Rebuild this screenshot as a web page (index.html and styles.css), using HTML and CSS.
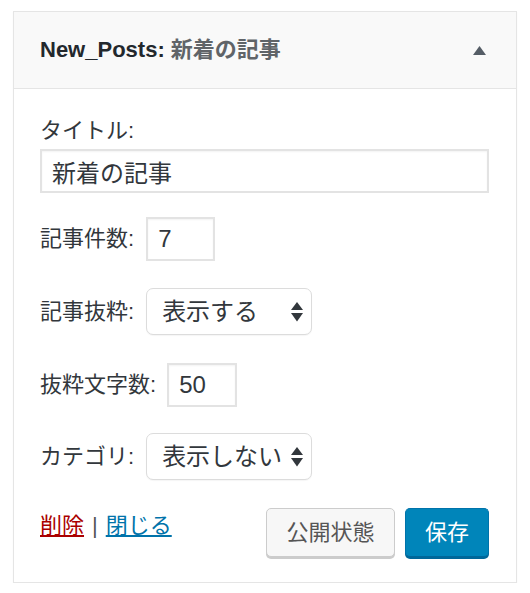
FILE: index.html
```html
<!DOCTYPE html>
<html lang="ja">
<head>
<meta charset="utf-8">
<title>New_Posts widget</title>
<link rel="stylesheet" href="styles.css">
</head>
<body>
<div class="widget">
  <div class="widget-top">
    <h3 class="widget-title">New_Posts: <span class="in-title">新着の記事</span></h3>
    <svg class="toggle" width="13" height="9" viewBox="0 0 13 9"><polygon points="6.5,0 13,9 0,9" fill="#555d66"/></svg>
  </div>
  <div class="widget-inside">
    <label class="block-label" for="t">タイトル:</label>
    <input id="t" class="text-input" type="text" value="新着の記事">

    <div class="row r2">
      <label class="lbl" for="n1">記事件数:</label>
      <input id="n1" class="num-input" type="text" value="7">
    </div>

    <div class="row r3">
      <label class="lbl">記事抜粋:</label>
      <div class="select">
        <span class="select-text">表示する</span>
        <svg class="arrows" width="12" height="20" viewBox="0 0 12 20"><polygon points="6,0 12,8 0,8" fill="#32373c"/><polygon points="0,11 12,11 6,19.5" fill="#32373c"/></svg>
      </div>
    </div>

    <div class="row r4">
      <label class="lbl" for="n2">抜粋文字数:</label>
      <input id="n2" class="num-input wide" type="text" value="50">
    </div>

    <div class="row r5">
      <label class="lbl">カテゴリ:</label>
      <div class="select">
        <span class="select-text">表示しない</span>
        <svg class="arrows" width="12" height="20" viewBox="0 0 12 20"><polygon points="6,0 12,8 0,8" fill="#32373c"/><polygon points="0,11 12,11 6,19.5" fill="#32373c"/></svg>
      </div>
    </div>

    <div class="actions">
      <div class="links">
        <a class="delete" href="#">削除</a><span class="sep">|</span><a class="close" href="#">閉じる</a>
      </div>
      <div class="buttons">
        <button class="btn btn-secondary" type="button">公開状態</button>
        <button class="btn btn-primary" type="button">保存</button>
      </div>
    </div>
  </div>
</div>
</body>
</html>
```

FILE: styles.css
```css
html, body {
  margin: 0;
  padding: 0;
  background: #ffffff;
}

body {
  font-family: "Liberation Sans", "Noto Sans CJK JP", sans-serif;
  color: #32373c;
}

.widget {
  box-sizing: border-box;
  width: 504px;
  margin: 11px 0 0 13px;
  border: 1px solid #e5e5e5;
  background: #ffffff;
  box-shadow: 0 1px 1px rgba(0, 0, 0, 0.05);
}

.widget-top {
  box-sizing: border-box;
  height: 77px;
  background: #f9f9f9;
  border-bottom: 1px solid #e5e5e5;
  display: flex;
  align-items: center;
  justify-content: space-between;
  padding: 0 30px 0 26px;
}

.widget-title {
  margin: 0;
  font-size: 22px;
  line-height: 30px;
  font-weight: 700;
  color: #23282d;
}

.in-title {
  color: #606468;
}

.toggle {
  display: block;
}

.widget-inside {
  padding: 27px 27px 25px 26px;
}

.block-label {
  display: block;
  font-size: 22px;
  line-height: 30px;
  margin-bottom: 3px;
}

.text-input,
.num-input {
  box-sizing: border-box;
  display: block;
  height: 44px;
  margin: 0;
  border: 2px solid #e3e3e3;
  border-radius: 0;
  background: #ffffff;
  box-shadow: inset 0 1px 2px rgba(0, 0, 0, 0.05);
  font-family: "Liberation Sans", "Noto Sans CJK JP", sans-serif;
  font-size: 24px;
  color: #32373c;
  padding: 0 0 0 10px;
  outline: none;
}

.text-input {
  width: 449px;
}

.num-input {
  width: 69px;
}

.num-input.wide {
  width: 70px;
}

.row {
  display: flex;
  align-items: center;
}

.r2 { margin-top: 24px; }
.r3 { margin-top: 27px; }
.r4 { margin-top: 28px; }
.r5 { margin-top: 26px; }

.lbl {
  font-size: 22px;
  line-height: 30px;
  margin-right: 12px;
  white-space: nowrap;
}

.r4 .lbl {
  margin-right: 11px;
}

.select {
  position: relative;
  box-sizing: border-box;
  width: 166px;
  height: 47px;
  border: 1px solid #dcdcdc;
  border-radius: 7px;
  background: #ffffff;
  box-shadow: 0 1px 1px rgba(0, 0, 0, 0.04);
  display: flex;
  align-items: center;
  padding-left: 15px;
}

.select-text {
  font-size: 24px;
  line-height: 30px;
  color: #32373c;
  white-space: nowrap;
}

.arrows {
  position: absolute;
  right: 8px;
  top: 13px;
}

.actions {
  margin-top: 28px;
  display: flex;
  justify-content: space-between;
  align-items: flex-start;
}

.links {
  font-size: 22px;
  line-height: 30px;
  padding-top: 3px;
}

.delete {
  color: #aa0000;
  text-decoration: underline;
}

.sep {
  color: #555555;
  margin: 0 8px;
}

.close {
  color: #0073aa;
  text-decoration: underline;
}

.buttons {
  display: flex;
  gap: 10px;
}

.btn {
  box-sizing: border-box;
  height: 49px;
  margin: 0;
  border-radius: 5px;
  font-family: "Liberation Sans", "Noto Sans CJK JP", sans-serif;
  font-size: 22px;
  line-height: 30px;
  padding: 0 18px;
  cursor: pointer;
}

.btn-secondary {
  width: 129px;
  background: #f7f7f7;
  border: 1px solid #cccccc;
  color: #555555;
  box-shadow: 0 2px 0 #cccccc;
}

.btn-primary {
  width: 84px;
  background: #0085ba;
  border: 1px solid #0073aa;
  border-bottom-color: #006799;
  color: #ffffff;
  box-shadow: 0 2px 0 #006799;
}
```
